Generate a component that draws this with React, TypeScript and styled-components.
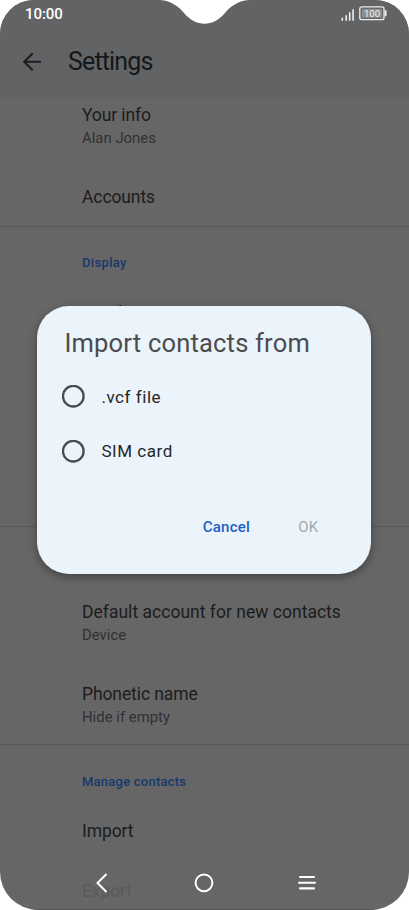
import React from "react";
import styled, { createGlobalStyle } from "styled-components";

const GlobalStyle = createGlobalStyle`
  * { box-sizing: border-box; }
  body { margin: 0; background: #fff; }
`;

const Phone = styled.main`
  position: relative;
  width: 409px;
  height: 910px;
  overflow: hidden;
  border-radius: 34px 34px 38px 38px;
  background: #666;
  font-family: Roboto, sans-serif;
  display: flex;
  flex-direction: column;
`;

const Header = styled.header`
  height: 98px;
  flex: none;
  background: #616365;
`;

const StatusBar = styled.div`
  height: 26px;
  padding: 1px 20px 0 25px;
  display: flex;
  justify-content: space-between;
  align-items: center;
`;

const Clock = styled.span`
  color: #fff;
  font-size: 15px;
  font-weight: 500;
  letter-spacing: -0.05px;
`;

const Notch = styled.svg`
  position: absolute;
  top: 0;
  left: 155px;
`;

const TitleBar = styled.div`
  height: 71px;
  padding-left: 22px;
  display: flex;
  align-items: center;
  gap: 26px;
`;

const PageTitle = styled.h1`
  margin: 0;
  font-size: 25px;
  line-height: 32px;
  font-weight: 400;
  letter-spacing: -0.85px;
  color: #161718;
`;

const Group = styled.section<{ $height: number; $top: number }>`
  flex: none;
  height: ${(p) => p.$height}px;
  padding: ${(p) => p.$top}px 0 0 82px;
  border-bottom: 1px solid #575758;
`;

const Entry = styled.div<{ $height?: number }>`
  height: ${(p) => p.$height ?? 82}px;
`;

const Label = styled.div<{ $faded?: boolean; $spacing?: number }>`
  font-size: 17.5px;
  line-height: 24px;
  letter-spacing: ${(p) => p.$spacing ?? -0.1}px;
  white-space: nowrap;
  color: ${(p) => (p.$faded ? "#5a5a5a" : "#1c1c1d")};
`;

const Detail = styled.div`
  font-size: 14.8px;
  line-height: 22px;
  letter-spacing: 0.05px;
  color: #303132;
`;

const GroupTitle = styled.h2<{ $gap: number; $spacing: number }>`
  margin: 0 0 ${(p) => p.$gap}px;
  font-size: 13px;
  line-height: 18px;
  font-weight: 500;
  letter-spacing: ${(p) => p.$spacing}px;
  color: #17386d;
`;

const Dialog = styled.section`
  position: absolute;
  left: 37.4px;
  top: 305.7px;
  width: 334px;
  height: 268.5px;
  padding: 21px 28px 0 25px;
  border-radius: 32px;
  background: #ebf3fb;
  box-shadow: 0 3px 9px rgba(0, 0, 0, 0.36);
`;

const DialogTitle = styled.h2`
  margin: 0 0 27px 2px;
  font-size: 25.5px;
  line-height: 32px;
  font-weight: 400;
  letter-spacing: 0.2px;
  white-space: nowrap;
  color: #4a4c4e;
`;

const Option = styled.label`
  height: 22.5px;
  margin-bottom: 32px;
  display: flex;
  align-items: center;
  gap: 16px;
  font-size: 17px;
  letter-spacing: 0.55px;
  color: #242628;
`;

const Actions = styled.div`
  display: flex;
  justify-content: flex-end;
  gap: 48px;
  padding: 22.5px 25px 0 0;
`;

const Action = styled.button`
  padding: 0;
  border: 0;
  background: none;
  font: 500 15px/20px Roboto, sans-serif;
  letter-spacing: 0.25px;
  color: #235fc3;
  &:disabled {
    color: #a5a9ad;
    font-weight: 400;
  }
`;

const NavBar = styled.nav`
  position: absolute;
  left: 0;
  right: 0;
  bottom: 14px;
  height: 26px;
  padding: 0 90px 0 89px;
  display: flex;
  align-items: center;
  justify-content: space-between;
`;

const Radio = () => (
  <svg width="23" height="23" viewBox="0 0 23 23" fill="none" stroke="#494b4d" strokeWidth="2.3">
    <circle cx="11.3" cy="11.2" r="10.3" />
  </svg>
);

const StatusIcons = () => (
  <svg width="48" height="18" viewBox="0 0 48 18">
    <path d="M2 15v-3M5.9 15V9.5M9.4 15V6.5M12.8 15V3.5" transform="translate(-.7 .8)" stroke="#eee" strokeWidth="1.6" />
    <rect x="18.8" y="1.9" width="24.2" height="12.8" rx="2" fill="#616365" stroke="#eee" strokeWidth="1.3" />
    <rect x="20.7" y="3.8" width="20.4" height="9" fill="#8b8c8e" />
    <path d="M44.6 5.3v6" stroke="#eee" strokeWidth="1.8" />
    <text x="31" y="11.8" textAnchor="middle" fontFamily="Roboto" fontSize="9.5" fill="#f4f4f4">100</text>
  </svg>
);

export default function App() {
  return (
    <>
      <GlobalStyle />
      <Phone>
        <Header>
          <StatusBar>
            <Clock>10:00</Clock>
            <StatusIcons />
          </StatusBar>
          <TitleBar>
            <svg width="20" height="20" viewBox="0 0 20 20" fill="none" stroke="#1d1e20" strokeWidth="2.1">
              <path d="M19 9.7H2.5M10.7 1.2L2.2 9.7l8.5 8.5" />
            </svg>
            <PageTitle>Settings</PageTitle>
          </TitleBar>
        </Header>
        <Notch width="99" height="24" viewBox="0 0 99 24">
          <path d="M5 0C17 1 24 7 29 13C35 20 42 23.7 49.5 23.7S64 20 70 13C75 7 82 1 94 0Z" fill="#fff" />
        </Notch>

        <Group $height={129} $top={5}>
          <Entry>
            <Label>Your info</Label>
            <Detail>Alan Jones</Detail>
          </Entry>
          <Label>Accounts</Label>
        </Group>
        <Group $height={300} $top={27}>
          <GroupTitle $gap={29} $spacing={0.35}>Display</GroupTitle>
          <Label>Sort by</Label>
        </Group>
        <Group $height={218} $top={73}>
          <Entry>
            <Label $spacing={0.02}>Default account for new contacts</Label>
            <Detail>Device</Detail>
          </Entry>
          <Label>Phonetic name</Label>
          <Detail>Hide if empty</Detail>
        </Group>
        <Group as="div" $height={165} $top={28}>
          <GroupTitle $gap={28} $spacing={0.23}>Manage contacts</GroupTitle>
          <Entry $height={60}>
            <Label>Import</Label>
          </Entry>
          <Label $faded>Export</Label>
        </Group>

        <Dialog role="dialog" aria-label="Import contacts from">
          <DialogTitle>Import contacts from</DialogTitle>
          <Option><Radio />.vcf file</Option>
          <Option><Radio />SIM card</Option>
          <Actions>
            <Action>Cancel</Action>
            <Action disabled>OK</Action>
          </Actions>
        </Dialog>

        <NavBar>
          <svg width="24" height="24" viewBox="0 0 24 24" fill="none" stroke="#fff" strokeWidth="2">
            <path d="M17.5 3L8.5 12l9 9" />
          </svg>
          <svg width="24" height="24" viewBox="0 0 24 24" fill="none" stroke="#fff" strokeWidth="2">
            <circle cx="12" cy="11.8" r="8.4" />
          </svg>
          <svg width="24" height="24" viewBox="0 0 24 24" fill="none" stroke="#fff" strokeWidth="2.1" strokeLinecap="round">
            <path d="M5 6h14M4 11.7h16M5 17.4h14" />
          </svg>
        </NavBar>
      </Phone>
    </>
  );
}
